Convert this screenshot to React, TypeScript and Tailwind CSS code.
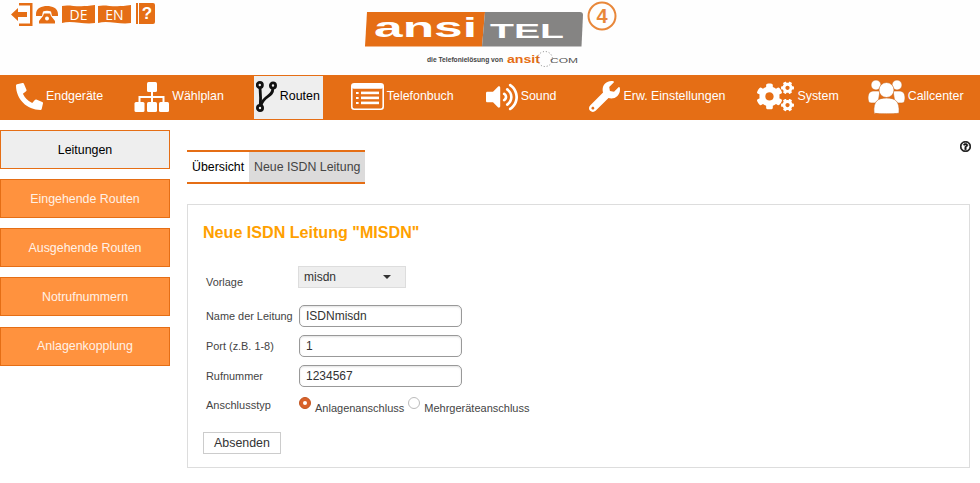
import React from 'react'
import { FaPhoneAlt, FaVolumeUp, FaWrench, FaCogs, FaRegQuestionCircle } from 'react-icons/fa'

const FONT = "font-['Liberation_Sans',Arial,sans-serif]"

function SitemapIcon() {
  return (
    <svg width="35" height="30" viewBox="0 0 35 30" fill="#fff">
      <rect x="13" y="0" width="10" height="10" rx="1.5" />
      <rect x="0.5" y="20" width="10" height="10" rx="1.5" />
      <rect x="13" y="20" width="10" height="10" rx="1.5" />
      <rect x="25" y="20" width="10" height="10" rx="1.5" />
      <path d="M17 10 H19 V14 H30.5 V20 H28.5 V16 H19 V20 H17 V16 H6.5 V20 H4.5 V14 H17Z" />
    </svg>
  )
}

function RouteIcon() {
  return (
    <svg width="21" height="33" viewBox="0 0 21 33" fill="none" stroke="#111" strokeWidth="2.8">
      <circle cx="3.8" cy="5" r="2.6" />
      <circle cx="17" cy="5.5" r="2.6" />
      <circle cx="4" cy="28" r="2.6" />
      <path d="M4 8 C4.5 14 5 18 4.3 25" />
      <path d="M16.8 8.5 C17 17 8 15 5 25" />
    </svg>
  )
}

function BookIcon() {
  return (
    <svg width="33" height="27" viewBox="0 0 33 27">
      <rect x="0.8" y="0.8" width="31.4" height="25.4" rx="2.5" fill="#e56e15" stroke="#fff" strokeWidth="1.6" />
      <rect x="0.8" y="0.8" width="31.4" height="5" rx="2" fill="#fff" />
      <g fill="#fff">
        <rect x="5" y="9" width="2.6" height="2" />
        <rect x="5" y="14" width="2.6" height="2" />
        <rect x="5" y="19" width="2.6" height="2" />
        <rect x="10" y="8.6" width="18" height="2.6" />
        <rect x="10" y="13.6" width="18" height="2.6" />
        <rect x="10" y="18.6" width="18" height="2.6" />
      </g>
    </svg>
  )
}

function PeopleIcon() {
  return (
    <svg width="37" height="35" viewBox="0 0 37 35" fill="#fff" stroke="#c9641a" strokeWidth="0.6">
      <circle cx="8" cy="6" r="5" />
      <circle cx="29" cy="6" r="5" />
      <path d="M0 19 C0 13 3 12 6 12 L12 12 L10 24 L3 24 C1 24 0 22 0 19Z" />
      <path d="M37 19 C37 13 34 12 31 12 L25 12 L27 24 L34 24 C36 24 37 22 37 19Z" />
      <path d="M6 34 C5 22 10 19 18.5 19 C27 19 32 22 31 34 C31 35 6 35 6 34Z" />
      <circle cx="18.5" cy="11" r="7.5" />
    </svg>
  )
}

function ExitIcon() {
  return (
    <svg width="22" height="23" viewBox="0 0 22 23" fill="#e56e15">
      <path d="M8 0 H21.5 V23 H8 V20.5 H19 V2.5 H8Z" />
      <path d="M0 11.5 L7 5 V9 H16 V14 H7 V18Z" />
    </svg>
  )
}

function HangupIcon() {
  return (
    <svg width="22" height="18" viewBox="0 0 22 18" fill="#e56e15">
      <path d="M0 8 C0 2 6 0 11 0 C16 0 22 2 22 8 V10 H16 L15 5.5 C13 4.6 9 4.6 7 5.5 L6 10 H0Z" />
      <path d="M8 7.5 H14 L15 10 L19 15 V17.5 H3 V15 L7 10Z" />
      <circle cx="11" cy="12.5" r="2" fill="#fff" />
    </svg>
  )
}

function Flag({ label }: { label: string }) {
  return (
    <div className="relative w-[33px] h-[19px]">
      <svg width="33" height="19" viewBox="0 0 33 19" fill="#e56e15" className="absolute inset-0">
        <path d="M0 1 C8 -1 14 3 33 0 V18 C22 20 10 15 0 18Z" />
      </svg>
      <span className="absolute inset-0 flex items-center justify-center text-white text-[14px] font-['Open_Sans',sans-serif] leading-none">
        {label}
      </span>
    </div>
  )
}

function HelpBook() {
  return (
    <div className="flex h-[21px] w-[19px] gap-[1px]">
      <div className="w-[2px] bg-[#e56e15]" />
      <div className="flex-1 rounded-r-[2px] bg-[#e56e15] flex items-center justify-center text-white text-[17px] font-bold leading-none">
        ?
      </div>
    </div>
  )
}

function Logo() {
  return (
    <svg width="260" height="75" viewBox="0 0 260 75">
      <path d="M9 12 H127 L124 46.5 H7Z" fill="#e56e15" />
      <path d="M127 12 H222 Q225 12 225 15 L223.5 46.5 H124Z" fill="#858483" />
      <text x="16" y="37" fontFamily="'Liberation Sans'" fontWeight="700" fontSize="27" fill="#fff" textLength="103" lengthAdjust="spacingAndGlyphs">ansi</text>
      <text x="132" y="37.5" fontFamily="'Liberation Sans'" fontWeight="700" fontSize="20" fill="#fff" textLength="74" lengthAdjust="spacingAndGlyphs">TEL</text>
      <circle cx="244" cy="16" r="13.5" fill="none" stroke="#e8873a" strokeWidth="2" />
      <text x="244" y="23" textAnchor="middle" fontFamily="'Liberation Sans'" fontWeight="700" fontSize="20" fill="#e8873a">4</text>
      <text x="69" y="62" fontFamily="'Liberation Sans'" fontSize="7" fontWeight="700" fill="#444" textLength="76" lengthAdjust="spacingAndGlyphs">die Telefonielösung von</text>
      <text x="149" y="63" fontFamily="'Liberation Sans'" fontWeight="700" fontSize="10" fill="#e56e15" textLength="33" lengthAdjust="spacingAndGlyphs">ansit</text>
      <text x="192" y="63" fontFamily="'Liberation Sans'" fontSize="8" fill="#555" textLength="28" lengthAdjust="spacingAndGlyphs">COM</text>
      <circle cx="187" cy="59" r="7.5" fill="none" stroke="#666" strokeWidth="0.8" strokeDasharray="1 2" />
    </svg>
  )
}

const navItems = [
  { label: 'Endgeräte', icon: <FaPhoneAlt size={27} color="#fff" />, w: 'w-[27px]', ml: 'ml-[16px]' },
  { label: 'Wählplan', icon: <SitemapIcon />, w: 'w-[35px]', ml: 'ml-[31px]' },
  { label: 'Routen', icon: <RouteIcon />, w: 'w-[21px]', ml: 'ml-[30px]', active: true },
  { label: 'Telefonbuch', icon: <BookIcon />, w: 'w-[33px]', ml: 'ml-[28px]' },
  { label: 'Sound', icon: <FaVolumeUp size={32} color="#fff" />, w: 'w-[32px]', ml: 'ml-[32px]' },
  { label: 'Erw. Einstellungen', icon: <FaWrench size={31} color="#fff" />, w: 'w-[31px]', ml: 'ml-[33px]' },
  { label: 'System', icon: <FaCogs size={37} color="#fff" />, w: 'w-[37px]', ml: 'ml-[32px]' },
  { label: 'Callcenter', icon: <PeopleIcon />, w: 'w-[37px]', ml: 'ml-[29px]' },
]

const sideItems = ['Leitungen', 'Eingehende Routen', 'Ausgehende Routen', 'Notrufnummern', 'Anlagenkopplung']

function Field({ label, value }: { label: string; value: string }) {
  return (
    <div className="flex items-center h-[22px] mb-[8px]">
      <label className="w-[96px] pl-[3px] text-[10.9px] text-[#444]">{label}</label>
      <input
        readOnly
        value={value}
        className="w-[163px] h-[22px] rounded-[5px] border border-[#999] px-[6px] text-[12px] text-[#333] bg-white shadow-[inset_0_1px_2px_rgba(0,0,0,0.12)] outline-none"
      />
    </div>
  )
}

function Radio({ checked }: { checked?: boolean }) {
  return checked ? (
    <span className="w-[12px] h-[12px] rounded-full bg-[#d9622b] border border-[#c25520] flex items-center justify-center">
      <span className="w-[4px] h-[4px] rounded-full bg-white" />
    </span>
  ) : (
    <span className="w-[12px] h-[12px] rounded-full border border-[#bbb] bg-white" />
  )
}

export default function App() {
  return (
    <div className={`${FONT} bg-white w-[980px] h-[483px] overflow-hidden`}>
      {/* top bar */}
      <header className="relative h-[75px] bg-[#fefefe]">
        <div className="flex items-start gap-[3px] pl-[11px] pt-[3px]">
          <ExitIcon />
          <div className="pt-[3px]"><HangupIcon /></div>
          <div className="pt-[2px] ml-[1px]"><Flag label="DE" /></div>
          <div className="pt-[2px]"><Flag label="EN" /></div>
          <div className="ml-[2px]"><HelpBook /></div>
        </div>
        <div className="absolute left-[358px] top-0">
          <Logo />
        </div>
      </header>

      {/* main nav */}
      <nav className="flex h-[45px] bg-[#e56e15] text-[12.4px]">
        {navItems.map(item => (
          <div
            key={item.label}
            className={`flex items-center gap-[3px] pb-[2px] ${item.ml} ${
              item.active ? 'bg-[#eeeeee] text-black h-[43px] mt-[1px] pl-[2px] pr-[3px]' : 'text-white'
            }`}
          >
            <span className={`${item.w} flex justify-center`}>{item.icon}</span>
            <span>{item.label}</span>
          </div>
        ))}
      </nav>

      <div className="flex">
        {/* sidebar */}
        <aside className="w-[170px] pt-[10px] flex flex-col gap-[10px]">
          {sideItems.map((s, i) => (
            <div
              key={s}
              className={`h-[39px] flex items-center justify-center border border-[#e56e15] text-[12.4px] ${
                i === 0 ? 'bg-[#eeeeee] text-black' : 'bg-[#ff923e] text-[#fff1e6]'
              } ${i === 4 ? 'mt-[1px]' : 'pt-[1px]'}`}
            >
              {s}
            </div>
          ))}
        </aside>

        {/* content */}
        <main className="relative ml-[17px] w-[783px] pt-[30px]">
          <FaRegQuestionCircle size={11} color="#111" className="absolute right-[-1px] top-[21px] stroke-[30]" />

          <div className="inline-flex h-[34px] border-y-2 border-[#e56e15] text-[12.35px]">
            <div className="px-[5px] w-[62px] flex items-center text-black whitespace-nowrap">Übersicht</div>
            <div className="px-[5px] flex items-center bg-[#dcdbdb] text-[#444]">Neue ISDN Leitung</div>
          </div>

          <section className="mt-[20px] h-[264px] border border-[#ddd] pl-[15px] pt-[18px]">
            <h2 className="text-[16.1px] leading-[18px] font-bold text-[#ffa000]">Neue ISDN Leitung "MISDN"</h2>

            <div className="flex mt-[25px] h-[22px] mb-[17px]">
              <label className="w-[95px] pl-[3px] pt-[8px] text-[10.9px] text-[#444]">Vorlage</label>
              <div className="w-[108px] h-[22px] bg-[#eeeeee] border border-[#ddd] pl-[5px] flex items-center text-[12px] text-[#333]">
                <span className="w-[79px]">misdn</span>
                <span className="w-0 h-0 border-x-[4px] border-x-transparent border-t-[4px] border-t-[#333]" />
              </div>
            </div>

            <Field label="Name der Leitung" value="ISDNmisdn" />
            <Field label="Port (z.B. 1-8)" value="1" />
            <Field label="Rufnummer" value="1234567" />

            <div className="flex items-start h-[22px] text-[11px] mt-[10px]">
              <label className="w-[96px] pl-[3px] text-[#444]">Anschlusstyp</label>
              <div className="flex items-start">
                <Radio checked />
                <span className="ml-[4px] mt-[3px] text-[#444]">Anlagenanschluss</span>
                <span className="ml-[4px] flex"><Radio /></span>
                <span className="ml-[4px] mt-[3px] text-[#444]">Mehrgeräteanschluss</span>
              </div>
            </div>

            <button className="mt-[13px] w-[78px] h-[22px] border border-[#ccc] bg-white text-[12.4px] text-[#333]">
              Absenden
            </button>
          </section>
        </main>
      </div>
    </div>
  )
}
